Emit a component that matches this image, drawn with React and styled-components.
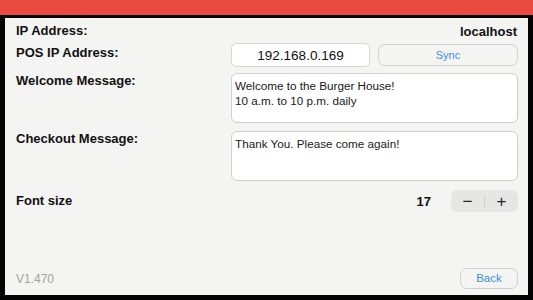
import React from "react";
import styled, { createGlobalStyle } from "styled-components";

const Global = createGlobalStyle`
  html, body { margin: 0; padding: 0; background: #000; }
  body { font-family: "Liberation Sans", Arial, sans-serif; }
  * { box-sizing: border-box; }
`;

const Screen = styled.div`
  width: 533px;
  height: 300px;
  background: #050505;
  display: flex;
  flex-direction: column;
  overflow: hidden;
`;

const Header = styled.div`
  height: 15px;
  flex: none;
  background: #e84b3d;
`;

const Panel = styled.div`
  flex: 1;
  margin: 3px 5px 5px 5px;
  background: #f4f4f2;
  padding: 4px 10px 4px 11px;
  display: flex;
  flex-direction: column;
  color: #111;
`;

const Row = styled.div`
  display: flex;
  align-items: ${(p) => (p.$top ? "flex-start" : "center")};
  height: ${(p) => p.$h}px;
  margin-top: ${(p) => p.$mt || 0}px;
`;

const Label = styled.div`
  flex: 1;
  font-size: 13px;
  font-weight: 700;
  line-height: 16px;
  margin-bottom: ${(p) => p.$raise || 0}px;
`;

const Value = styled.div`
  font-size: 13px;
  font-weight: 700;
  padding-right: 1px;
`;

const Field = styled.div`
  width: 139px;
  height: 24px;
  background: #fff;
  border: 1px solid #d6d6d6;
  border-radius: 5px;
  display: flex;
  align-items: center;
  justify-content: center;
  font-size: 13.5px;
  color: #111;
`;

const OutlineButton = styled.button`
  width: ${(p) => p.$w}px;
  height: ${(p) => p.$hh}px;
  margin-left: ${(p) => p.$ml || 0}px;
  background: transparent;
  border: 1px solid #cfcfcf;
  border-radius: 7px;
  color: #3d8fe4;
  font-family: "Liberation Sans", Arial, sans-serif;
  font-size: ${(p) => p.$fs || 11}px;
  padding: 0;
  display: flex;
  align-items: center;
  justify-content: center;
`;

const TextBox = styled.div`
  width: 287px;
  height: 50px;
  background: #fff;
  border: 1px solid #cfcfcf;
  border-radius: 6px;
  padding: 5px 3px;
  font-size: 11.7px;
  line-height: 14.5px;
  color: #1a1a1a;
  white-space: pre-line;
`;

const Count = styled.div`
  font-size: 13px;
  font-weight: 700;
  margin-right: 20px;
`;

const Stepper = styled.div`
  width: 67px;
  height: 22px;
  background: #e6e6e5;
  border-radius: 6px;
  display: flex;
  align-items: center;
`;

const StepHalf = styled.div`
  flex: 1;
  height: 100%;
  display: flex;
  align-items: center;
  justify-content: center;
  color: #222;
  font-size: 17px;
  line-height: 1;
`;

const Divider = styled.div`
  width: 1px;
  height: 11px;
  background: #cdcdcd;
`;

const Footer = styled.div`
  margin-top: auto;
  display: flex;
  align-items: center;
  justify-content: space-between;
  height: 22px;
  margin-bottom: 2px;
`;

const Version = styled.div`
  font-size: 12px;
  color: #a3a3a3;
  margin-top: 2px;
`;

export default function App() {
  return (
    <>
      <Global />
      <Screen>
        <Header />
        <Panel>
          <Row $h={18}>
            <Label>IP Address:</Label>
            <Value>localhost</Value>
          </Row>
          <Row $h={24} $mt={3}>
            <Label $raise={5}>POS IP Address:</Label>
            <Field>192.168.0.169</Field>
            <OutlineButton $w={140} $hh={22} $ml={8}>Sync</OutlineButton>
          </Row>
          <Row $h={50} $mt={6} $top>
            <Label>Welcome Message:</Label>
            <TextBox>{"Welcome to the Burger House!\n10 a.m. to 10 p.m. daily"}</TextBox>
          </Row>
          <Row $h={50} $mt={8} $top>
            <Label>Checkout Message:</Label>
            <TextBox>Thank You. Please come again!</TextBox>
          </Row>
          <Row $h={22} $mt={9}>
            <Label>Font size</Label>
            <Count>17</Count>
            <Stepper>
              <StepHalf>−</StepHalf>
              <Divider />
              <StepHalf>+</StepHalf>
            </Stepper>
          </Row>
          <Footer>
            <Version>V1.470</Version>
            <OutlineButton $w={58} $hh={21} $fs={11.5}>Back</OutlineButton>
          </Footer>
        </Panel>
      </Screen>
    </>
  );
}
